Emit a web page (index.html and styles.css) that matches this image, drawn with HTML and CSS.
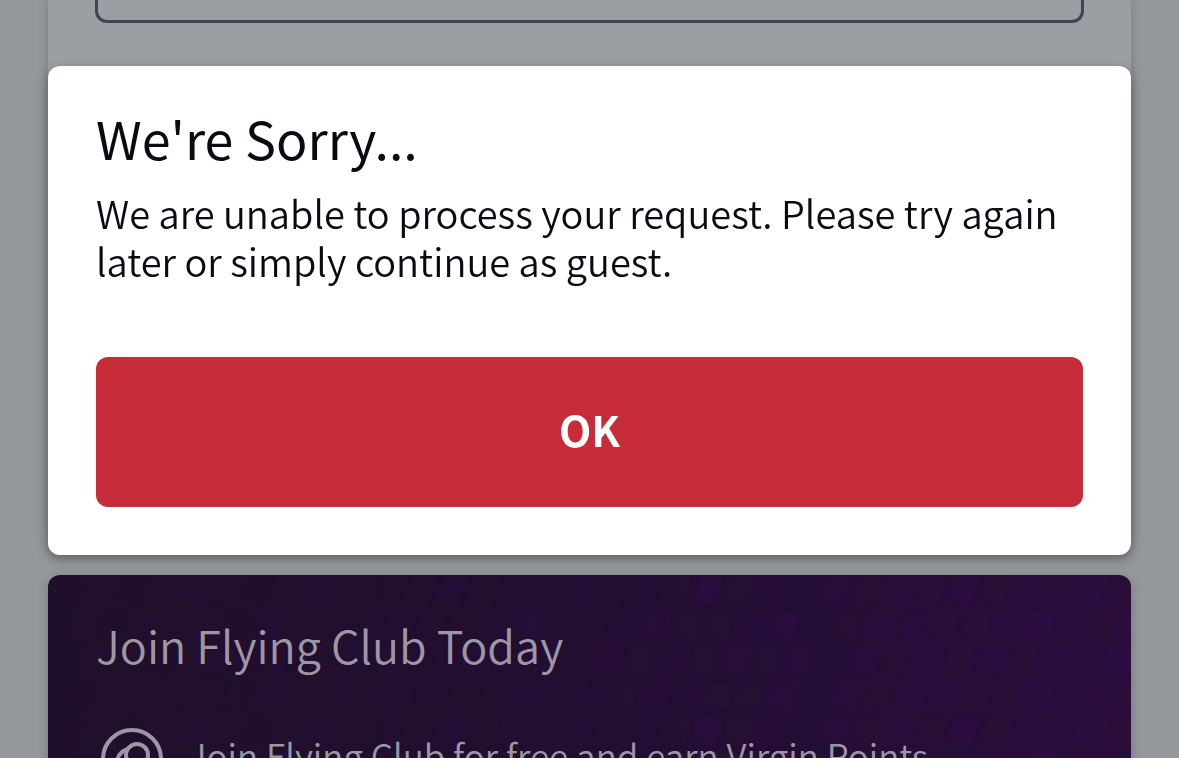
FILE: index.html
```html
<!DOCTYPE html>
<html lang="en">
<head>
  <meta charset="UTF-8" />
  <meta name="viewport" content="width=device-width, initial-scale=1.0"/>
  <title>Log in</title>
  <link rel="stylesheet" href="styles.css">
</head>
<body>

  <main class="page">
    <form class="card login-card">
      <input type="text" class="login-input" aria-label="Password" />
    </form>

    <section class="card join-card">
      <svg class="join-pattern" aria-hidden="true">
        <defs>
          <pattern id="tiles" width="256" height="140" patternUnits="userSpaceOnUse">
            <g fill="#340e50">
              <path d="M12 2h24l-9 30-24-9z" opacity=".7"/>
              <path d="M76 2h24l-9 30-24-9z" opacity=".4"/>
              <path d="M140 2h24l-9 30-24-9z"/>
              <path d="M204 2h24l-9 30-24-9z" opacity=".5"/>
              <path d="M56 37h24l-9 30-24-9z" opacity=".5"/>
              <path d="M88 37h24l-9 30-24-9z"/>
              <path d="M184 37h24l-9 30-24-9z" opacity=".6"/>
              <path d="M216 37h24l-9 30-24-9z"/>
              <path d="M40 72h24l-9 30-24-9z"/>
              <path d="M104 72h24l-9 30-24-9z" opacity=".4"/>
              <path d="M168 72h24l-9 30-24-9z" opacity=".9"/>
              <path d="M230 72h24l-9 30-24-9z" opacity=".6"/>
              <path d="M24 107h24l-9 30-24-9z" opacity=".6"/>
              <path d="M88 107h24l-9 30-24-9z" opacity=".9"/>
              <path d="M120 107h24l-9 30-24-9z" opacity=".5"/>
              <path d="M216 107h24l-9 30-24-9z" opacity=".8"/>
            </g>
            <g fill="#2c1536">
              <path d="M44 2h24l-9 30-24-9z"/>
              <path d="M108 2h24l-9 30-24-9z"/>
              <path d="M172 2h24l-9 30-24-9z"/>
              <path d="M24 37h24l-9 30-24-9z"/>
              <path d="M120 37h24l-9 30-24-9z"/>
              <path d="M152 37h24l-9 30-24-9z"/>
              <path d="M72 72h24l-9 30-24-9z"/>
              <path d="M136 72h24l-9 30-24-9z"/>
              <path d="M200 72h24l-9 30-24-9z"/>
              <path d="M56 107h24l-9 30-24-9z"/>
              <path d="M152 107h24l-9 30-24-9z"/>
              <path d="M184 107h24l-9 30-24-9z"/>
            </g>
          </pattern>
        </defs>
        <rect width="100%" height="100%" fill="url(#tiles)"/>
      </svg>
      <h2>Join Flying Club Today</h2>
      <ul class="benefits">
        <li>
          <svg class="benefit-icon" viewBox="0 0 64 64" fill="none" stroke="currentColor" stroke-width="4" aria-hidden="true">
            <circle cx="32" cy="32" r="29"/>
            <circle cx="37" cy="28" r="11"/>
            <path d="M28 22c-6 2-10 6-11 12 0 7 5 12 11 12s10-4 11-8"/>
          </svg>
          <span>Join Flying Club for free and earn Virgin Points</span>
        </li>
      </ul>
    </section>
  </main>

  <div class="overlay">
    <div class="dialog" role="alertdialog" aria-labelledby="dialogTitle" aria-describedby="dialogText">
      <h1 id="dialogTitle">We're Sorry...</h1>
      <p id="dialogText">We are unable to process your request. Please try again later or simply continue as guest.</p>
      <button type="button">OK</button>
    </div>
  </div>

</body>
</html>
```
FILE: styles.css
```css
* {
  box-sizing: border-box;
  font-family: 'Noto Sans CJK SC', 'Open Sans', sans-serif;
}

body {
  margin: 0;
  background: #94979b;
  color: #080b12;
}

h1, h2, p, ul {
  margin: 0;
  padding: 0;
}

.page {
  height: 100vh;
  padding: 0 48px;
  overflow: hidden;
}

.card {
  padding: 0 48px;
  box-shadow: 0 2px 12px rgba(0, 0, 0, 0.2);
}

.login-card {
  min-height: 551px;
  margin-bottom: 24px;
  padding: 0 47px;
  background: #9b9ea2;
  border-radius: 0 0 12px 12px;
}

.login-input {
  display: block;
  width: 100%;
  height: 23px;
  background: transparent;
  border: 3px solid #42464c;
  border-top: none;
  border-radius: 0 0 12px 12px;
}

.join-card {
  position: relative;
  padding-top: 36px;
  background: linear-gradient(90deg, #1f102a, #220e31 50%, #280d3b);
  border-radius: 12px;
  overflow: hidden;
  color: #9e96a5;
}

.join-pattern {
  position: absolute;
  inset: 0;
  width: 100%;
  height: 100%;
  opacity: 0.4;
  mask-image: linear-gradient(90deg, rgba(0, 0, 0, 0.2), #000);
}

.join-card h2 {
  position: relative;
  font-size: 45px;
  line-height: 68px;
  font-weight: 350;
}

.benefits {
  position: relative;
  margin-top: 48px;
  padding-bottom: 48px;
  list-style: none;
}

.benefits li {
  display: flex;
  align-items: flex-start;
  gap: 24px;
  padding-left: 4px;
  font-size: 35px;
  line-height: 56px;
  font-weight: 350;
}

.benefit-icon {
  flex: none;
  width: 64px;
  height: 64px;
}

.overlay {
  position: fixed;
  inset: 0;
  padding: 66px 48px;
}

.dialog {
  padding: 40px 48px 48px;
  background: #fff;
  border-radius: 12px;
  box-shadow: 0 4px 12px rgba(0, 0, 0, 0.3);
}

.dialog h1 {
  font-size: 52px;
  line-height: 64px;
  font-weight: 400;
}

.dialog p {
  margin: 19px 0 72px;
  font-size: 38px;
  line-height: 48px;
  font-weight: 350;
}

.dialog button {
  display: block;
  width: 100%;
  height: 150px;
  padding-bottom: 8px;
  background: #c72c38;
  border: none;
  border-radius: 12px;
  color: #fff;
  font-size: 42px;
  font-weight: 700;
  cursor: pointer;
}
```
